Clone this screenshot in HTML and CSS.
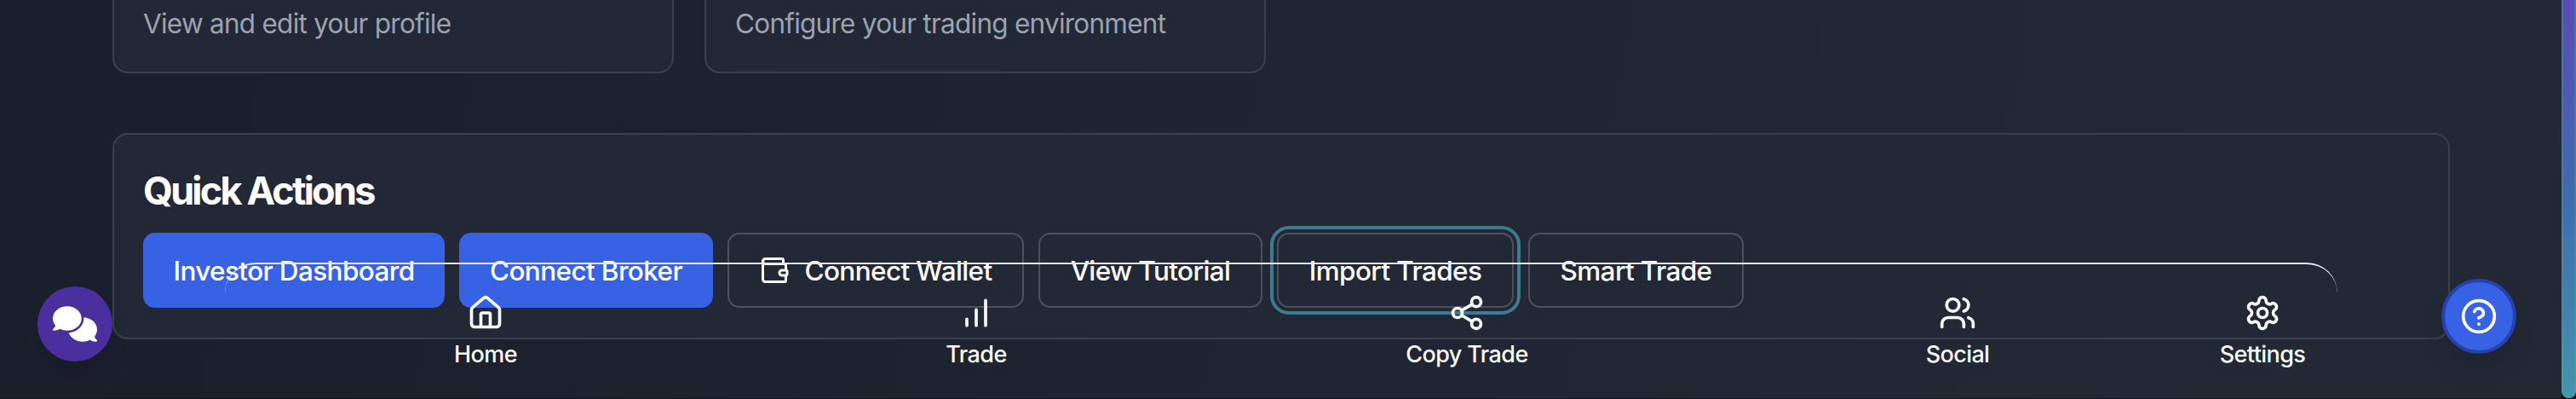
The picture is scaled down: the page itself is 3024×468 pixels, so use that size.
FILE: index.html
```html
<!DOCTYPE html>
<html lang="en">
<head>
<meta charset="utf-8">
<title>Dashboard</title>
<link rel="stylesheet" href="styles.css">
</head>
<body>
<main class="page">
  <div class="cards">
    <section class="card link-card"><p>View and edit your profile</p></section>
    <section class="card link-card"><p>Configure your trading environment</p></section>
  </div>
  <section class="card quick">
    <h2>Quick Actions</h2>
    <div class="actions">
      <button class="btn primary b1">Investor Dashboard</button>
      <button class="btn primary b2">Connect Broker</button>
      <button class="btn b3"><svg class="icon wallet" viewBox="0 0 24 24"><path d="M19 7V4a1 1 0 0 0-1-1H5a2 2 0 0 0 0 4h15a1 1 0 0 1 1 1v4h-3a2 2 0 0 0 0 4h3a1 1 0 0 0 1-1v-2a1 1 0 0 0-1-1"/><path d="M3 5v14a2 2 0 0 0 2 2h15a1 1 0 0 0 1-1v-4"/></svg>Connect Wallet</button>
      <button class="btn b4">View Tutorial</button>
      <button class="btn b5 focused">Import Trades</button>
      <button class="btn b6">Smart Trade</button>
    </div>
  </section>
</main>
<nav class="dock">
  <a class="item"><svg class="icon" viewBox="0 0 24 24"><path d="M15 21v-8a1 1 0 0 0-1-1h-4a1 1 0 0 0-1 1v8"/><path d="M3 10a2 2 0 0 1 .709-1.528l7-5.999a2 2 0 0 1 2.582 0l7 5.999A2 2 0 0 1 21 10v9a2 2 0 0 1-2 2H5a2 2 0 0 1-2-2z"/></svg><span>Home</span></a>
  <a class="item"><svg class="icon" viewBox="0 0 24 24"><path d="M12 20V10M18 20V4M6 20v-4"/></svg><span>Trade</span></a>
  <a class="item"><svg class="icon" viewBox="0 0 24 24"><circle cx="18" cy="5" r="3"/><circle cx="6" cy="12" r="3"/><circle cx="18" cy="19" r="3"/><path d="M8.59 13.51l6.83 3.98M15.41 6.51l-6.82 3.98"/></svg><span>Copy Trade</span></a>
  <a class="item"><svg class="icon" viewBox="0 0 24 24"><path d="M16 21v-2a4 4 0 0 0-4-4H6a4 4 0 0 0-4 4v2"/><circle cx="9" cy="7" r="4"/><path d="M22 21v-2a4 4 0 0 0-3-3.87M16 3.13a4 4 0 0 1 0 7.75"/></svg><span>Social</span></a>
  <a class="item last"><svg class="icon" viewBox="0 0 24 24"><path d="M12.22 2h-.44a2 2 0 0 0-2 2v.18a2 2 0 0 1-1 1.73l-.43.25a2 2 0 0 1-2 0l-.15-.08a2 2 0 0 0-2.73.73l-.22.38a2 2 0 0 0 .73 2.73l.15.1a2 2 0 0 1 1 1.72v.51a2 2 0 0 1-1 1.74l-.15.09a2 2 0 0 0-.73 2.73l.22.38a2 2 0 0 0 2.73.73l.15-.08a2 2 0 0 1 2 0l.43.25a2 2 0 0 1 1 1.73V20a2 2 0 0 0 2 2h.44a2 2 0 0 0 2-2v-.18a2 2 0 0 1 1-1.73l.43-.25a2 2 0 0 1 2 0l.15.08a2 2 0 0 0 2.73-.73l.22-.39a2 2 0 0 0-.73-2.73l-.15-.08a2 2 0 0 1-1-1.74v-.5a2 2 0 0 1 1-1.74l.15-.09a2 2 0 0 0 .73-2.73l-.22-.38a2 2 0 0 0-2.73-.73l-.15.08a2 2 0 0 1-2 0l-.43-.25a2 2 0 0 1-1-1.73V4a2 2 0 0 0-2-2z"/><circle cx="12" cy="12" r="3"/></svg><span>Settings</span></a>
</nav>
<button class="fab chat" aria-label="Chat"><svg viewBox="0 0 640 512"><path d="M208 352c114.900 0 208-78.800 208-176S322.900 0 208 0S0 78.800 0 176c0 38.600 14.700 74.300 39.600 103.400c-3.500 9.400-8.700 17.700-14.200 24.700c-4.800 6.200-9.700 11-13.300 14.300c-1.800 1.600-3.300 2.900-4.300 3.700c-.5 .4-.9 .7-1.100 .8C1 327.200-1.400 334.400 .8 340.900S9.100 352 16 352c21.800 0 43.800-5.600 62.100-12.500c9.200-3.500 17.800-7.400 25.300-11.400C134.100 343.300 169.800 352 208 352zM448 176c0 112.300-99.100 196.900-216.500 207C255.800 457.400 336.400 512 432 512c38.200 0 73.900-8.700 104.700-23.900c7.500 4 16 7.900 25.200 11.400c18.300 6.900 40.300 12.500 62.100 12.500c6.900 0 13.100-4.500 15.200-11.100c2.100-6.600-.2-13.800-5.800-17.900c-3.300-2.600-19.500-14.700-31.700-42.700C625.300 410.300 640 374.600 640 336c0-92.800-84.900-168.900-192.600-175.500c.4 5.100 .6 10.300 .6 15.500z"/></svg></button>
<button class="fab help" aria-label="Help"><svg class="icon" viewBox="0 0 24 24"><circle cx="12" cy="12" r="10"/><path d="M9.090 9a3 3 0 0 1 5.830 1c0 2-3 3-3 3M12 17h.01"/></svg></button>
<div class="scrollbar"><div class="thumb"></div></div>
</body>
</html>
```
FILE: styles.css
```css
* { box-sizing: border-box; margin: 0; }
body {
  width: 3024px;
  height: 468px;
  overflow: hidden;
  position: relative;
  font-family: Inter, sans-serif;
  font-size: 31.5px;
  color: #fff;
  background: linear-gradient(100deg, #1a1f2c 0%, #1b202d 15%, #1f2532 55%, #222834 85%, #222834 100%);
  border-bottom: 1px solid #11151d;
}
.page { padding: 0 148px 0 132px; }
.cards { display: grid; grid-template-columns: repeat(4, 1fr); gap: 36px; height: 86px; margin-bottom: 70px; }
.card { border: 2px solid #3a404c; border-radius: 18px; background: #222835; }
.link-card { border-top: 0; border-radius: 0 0 18px 18px; padding: 5px 34px; color: #9ca3af; line-height: 45px; letter-spacing: -0.75px; white-space: nowrap; }
.quick { height: 242px; padding: 36px 34px; }
h2 { font-size: 45px; line-height: 60px; font-weight: 700; letter-spacing: -2.8px; white-space: nowrap; }
.actions { display: flex; gap: 17px; margin-top: 19px; }
.btn {
  height: 88px;
  display: flex;
  align-items: center;
  justify-content: center;
  border: 2px solid #4b515d;
  border-radius: 14px;
  background: transparent;
  color: #fff;
  font: 500 31.5px/45px Inter, sans-serif;
  letter-spacing: -0.62px;
  white-space: nowrap;
  padding: 0;
}
.primary { background: #3862e4; border: 0; }
.b1 { width: 354px; }
.b2 { width: 298px; }
.b3 { width: 348px; }
.b4 { width: 263px; }
.b5 { width: 278px; }
.b6 { width: 253px; }
.focused { box-shadow: 0 0 0 4px #222835, 0 0 0 8px #3e7b91; }
.icon { width: 44px; height: 44px; fill: none; stroke: currentColor; stroke-width: 2; stroke-linecap: round; stroke-linejoin: round; display: block; }
.wallet { width: 36px; height: 36px; margin-right: 17px; }
.dock {
  position: absolute;
  left: 264px;
  top: 308px;
  width: 2480px;
  height: 180px;
  display: flex;
  padding: 35px 18px 0;
  border-top: 2px solid #e5e7eb;
  border-radius: 36px 36px 0 0;
}
.item { width: 576px; display: flex; flex-direction: column; align-items: center; gap: 9px; font-size: 27px; line-height: 36px; font-weight: 500; letter-spacing: -0.6px; color: #f9fafb; }
.last { width: 140px; }
.fab { position: absolute; width: 88px; height: 88px; border-radius: 50%; display: flex; align-items: center; justify-content: center; padding: 0; color: #fff; box-shadow: 0 20px 30px -6px rgba(0, 0, 0, .12); }
.chat { left: 44px; top: 336px; border: 0; background: #4c2f9f; }
.chat svg { width: 52px; height: 42px; fill: #fff; }
.help { left: 2866px; top: 327px; border: 4px solid #2640ac; background: #3862e4; }
.scrollbar { position: absolute; right: 0; top: 0; width: 17px; height: 468px; background: #07060d; }
.thumb {
  height: 467px;
  border: 2px solid transparent;
  border-top: 0;
  border-radius: 0 0 8px 8px;
  background: linear-gradient(#5a4bb5, #426bae 50%, #4494aa) padding-box, linear-gradient(#4c6cb5, #427fae 50%, #429bb0) border-box;
}
```
